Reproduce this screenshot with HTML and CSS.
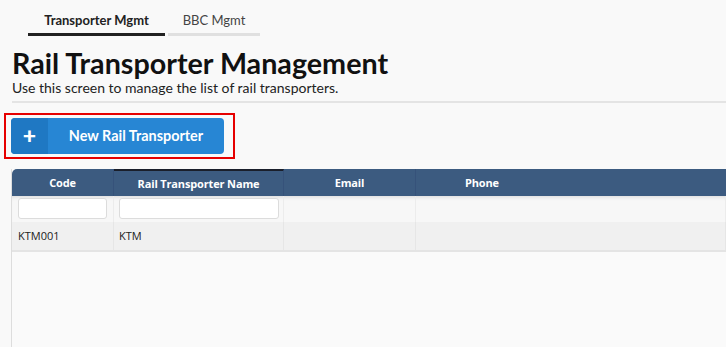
FILE: index.html
```html
<!DOCTYPE html>
<html lang="en">
<head>
<meta charset="UTF-8">
<title>Rail Transporter Management</title>
<link rel="stylesheet" href="styles.css">
</head>
<body>
  <div class="tabs">
    <div class="tab active">Transporter Mgmt</div>
    <div class="tab">BBC Mgmt</div>
  </div>

  <div class="header">
    <h1>Rail Transporter Management</h1>
    <p>Use this screen to manage the list of rail transporters.</p>
  </div>

  <div class="actions">
    <div class="highlight">
      <button class="btn-new">
        <span class="btn-icon">+</span>
        <span class="btn-text">New Rail Transporter</span>
      </button>
    </div>
  </div>

  <div class="grid">
    <div class="row head">
      <div class="cell c-code">Code</div>
      <div class="cell c-name sorted">Rail Transporter Name</div>
      <div class="cell c-email">Email</div>
      <div class="cell c-phone">Phone</div>
    </div>
    <div class="row filter">
      <div class="cell c-code"><input type="text"></div>
      <div class="cell c-name"><input type="text"></div>
      <div class="cell c-email"></div>
      <div class="cell c-phone"></div>
    </div>
    <div class="row data">
      <div class="cell c-code">KTM001</div>
      <div class="cell c-name">KTM</div>
      <div class="cell c-email"></div>
      <div class="cell c-phone"></div>
    </div>
    <div class="grid-body"></div>
  </div>
</body>
</html>
```

FILE: styles.css
```css
body {
  margin: 0;
  background-color: #f9f9f9;
  font-family: Lato, "Open Sans", sans-serif;
  color: #111;
  overflow: hidden;
}

.tabs {
  display: flex;
  gap: 3px;
  padding: 12px 0 0 28px;
}

.tab {
  width: 92px;
  padding: 0 0 5px;
  text-align: center;
  font-size: 13px;
  line-height: 16px;
  color: #444;
  border-bottom: 3px solid #e0e0e0;
}

.tab.active {
  width: 137px;
  font-weight: bold;
  color: #222;
  border-bottom-color: #222;
}

.header {
  margin-left: 12px;
  border-bottom: 2px solid #e4e4e4;
  padding-bottom: 5px;
}

.header h1 {
  margin: 12px 0 0;
  font-size: 28.7px;
  line-height: 30px;
  font-weight: bold;
  color: #111;
}

.header p {
  margin: 2px 0 0;
  font-size: 14px;
  line-height: 16px;
  color: #222;
}

.actions {
  padding: 10px 0 0 4px;
}

.highlight {
  display: inline-block;
  border: 2px solid #e60000;
  padding: 3px 9px 3px 5px;
}

.btn-new {
  display: flex;
  width: 213px;
  height: 36px;
  padding: 0;
  border: none;
  border-radius: 4px;
  background-color: #2786d4;
  color: #fff;
  font-family: Lato, sans-serif;
  font-weight: bold;
  font-size: 14.4px;
  overflow: hidden;
}

.btn-icon {
  width: 37px;
  height: 36px;
  line-height: 34px;
  background-color: #1f78c3;
  font-size: 23px;
  font-weight: 900;
}

.btn-text {
  flex: 1;
  line-height: 36px;
  text-align: center;
}

.grid {
  margin: 10px 0 0 11px;
  border-left: 1px solid #ddd;
  background-color: #fafafa;
  font-family: "Open Sans", sans-serif;
  font-size: 11px;
}

.row {
  display: flex;
}

.cell {
  box-sizing: border-box;
}

.c-code { width: 102px; }
.c-name { width: 170px; }
.c-email { width: 132px; }
.c-phone { flex: 1; }

.head {
  height: 27px;
  background-color: #3c5b80;
  border-top-left-radius: 5px;
  color: #fff;
  font-weight: bold;
  letter-spacing: -0.15px;
}

.head .cell {
  line-height: 27px;
  text-align: center;
  border-right: 1px solid #36527a;
}

.head .c-phone {
  text-align: left;
  padding-left: 49px;
  border-right: none;
}

.head .sorted {
  border-top: 2px solid #1a1f2b;
  line-height: 25px;
}

.filter {
  height: 26px;
  background-color: #f7f7f7;
  box-shadow: inset 0 4px 4px -3px rgba(0, 0, 0, 0.12);
}

.filter .cell {
  border-right: 1px solid #ececec;
}

.filter input {
  box-sizing: border-box;
  height: 21px;
  margin: 2px 0 0 6px;
  border: 1px solid #dcdcdc;
  border-radius: 3px;
  background-color: #fff;
}

.filter .c-code input { width: 89px; }
.filter .c-name input { width: 160px; margin-left: 5px; }

.data {
  height: 28px;
  line-height: 27px;
  background-color: #f0f0f0;
  border-bottom: 2px solid #e4e4e4;
  color: #222;
}

.data .cell {
  padding-left: 6px;
  border-right: 1px solid #e6e6e6;
}

.data .c-name { padding-left: 5px; }

.grid-body {
  height: 96px;
}
```
